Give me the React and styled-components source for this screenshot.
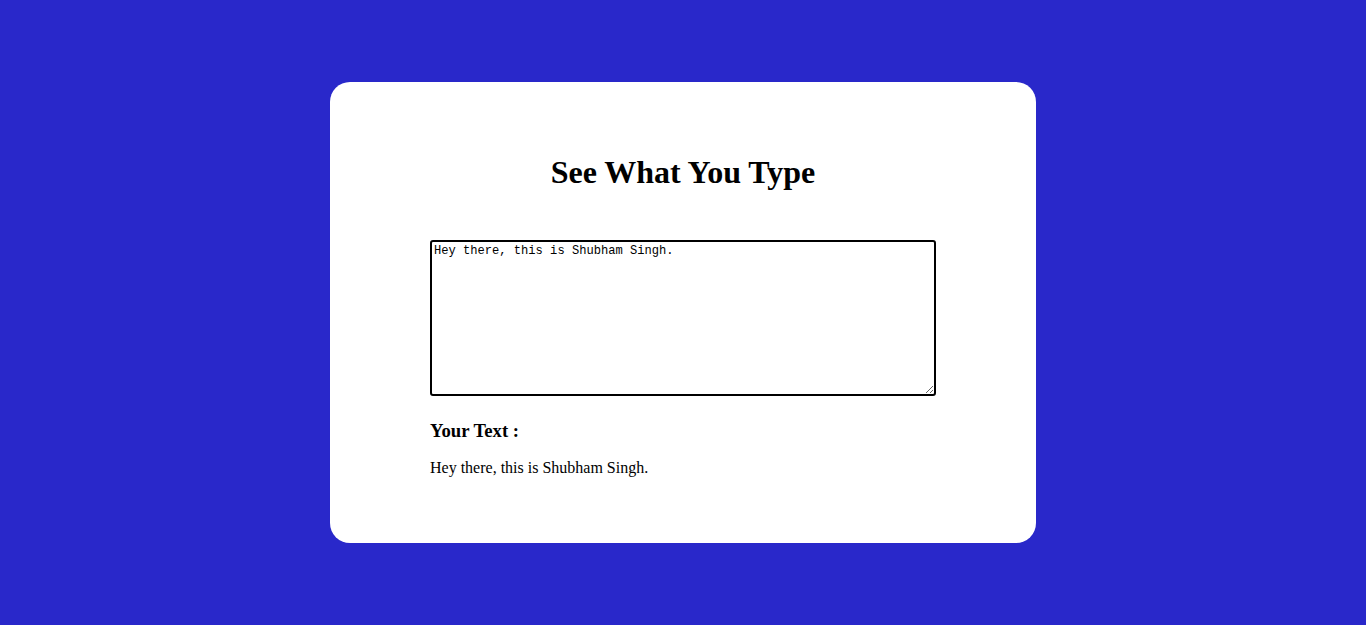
import React, { useState, useRef, useEffect } from "react";
import styled, { createGlobalStyle } from "styled-components";

const Global = createGlobalStyle`
  html, body { margin: 0; padding: 0; }
  body {
    background: #2928ca;
    font-family: "Liberation Serif", "Times New Roman", serif;
    color: #000;
  }
`;

const Page = styled.div`
  min-height: 100vh;
  display: flex;
  align-items: center;
  justify-content: center;
`;

const Card = styled.div`
  width: 506px;
  padding: 50px 100px;
  background: #fff;
  border-radius: 20px;
`;

const Title = styled.h1`
  font-size: 32px;
  font-weight: bold;
  text-align: center;
  margin: 22.44px 0 48.4px;
`;

const Input = styled.textarea`
  display: block;
  box-sizing: border-box;
  width: 506px;
  height: 156px;
  margin: 0;
  padding: 2px;
  border: 2px solid #000;
  border-radius: 3px;
  outline: none;
  font-family: "Liberation Mono", "DejaVu Sans Mono", monospace;
  font-size: 12.1px;
  color: #000;
  background: #fff;
`;

const Label = styled.h3`
  font-size: 18.72px;
  font-weight: bold;
  margin: 24.72px 0 16.72px;
`;

const Output = styled.p`
  font-size: 16px;
  margin: 16px 0;
`;

export default function App() {
  const [text, setText] = useState("Hey there, this is Shubham Singh.");
  const ref = useRef(null);
  useEffect(() => {
    const el = ref.current;
    if (el) {
      el.focus();
      el.setSelectionRange(el.value.length, el.value.length);
    }
  }, []);
  return (
    <Page>
      <Global />
      <Card>
        <Title>See What You Type</Title>
        <Input ref={ref} value={text} onChange={(e) => setText(e.target.value)} />
        <Label>Your Text :</Label>
        <Output>{text}</Output>
      </Card>
    </Page>
  );
}
